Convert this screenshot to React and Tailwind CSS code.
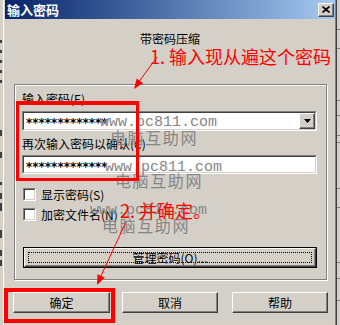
import React from "react";

function Raised({ className = "", children }) {
  return (
    <div
      className={
        "bg-[#d4d0c8] border border-t-white border-l-white border-r-[#404040] border-b-[#404040] shadow-[inset_-1px_-1px_0_#808080] " +
        className
      }
    >
      {children}
    </div>
  );
}

function Sunken({ className = "", innerClass = "", children }) {
  return (
    <div
      className={
        "border border-t-[#808080] border-l-[#808080] border-r-white border-b-white " +
        className
      }
    >
      <div
        className={
          "h-full border border-t-[#404040] border-l-[#404040] border-r-[#d4d0c8] border-b-[#d4d0c8] bg-white " +
          innerClass
        }
      >
        {children}
      </div>
    </div>
  );
}

const cjk = "font-['Noto_Sans_CJK_SC','Noto_Sans',sans-serif]";

function Stars() {
  return (
    <span className="pl-[2px] pt-[4px] font-['DejaVu_Sans',sans-serif] font-bold text-[12px] leading-[14px] text-black">
      *************
    </span>
  );
}

function Check({ label }) {
  return (
    <div className="ml-[1px] flex h-[13px] items-center">
      <Sunken className="h-[13px] w-[13px]" />
      <span className={"ml-[5px] text-[12px] leading-[14px] text-black " + cjk}>{label}</span>
    </div>
  );
}

const leftMarks = [
  [40, 3], [50, 3], [60, 3], [70, 3], [80, 3], [130, 6], [152, 6], [182, 3], [193, 6], [203, 8], [230, 8], [250, 6], [260, 6],
];
const rightLines = [29, 48, 100, 115, 135, 142, 188, 207, 262, 278, 300];

export default function App() {
  return (
    <div className="relative h-[325px] w-[340px] overflow-hidden bg-[#d4d0c8]">
      <div className="flex h-full">
        {/* background window, left edge */}
        <div className="flex w-[3px] flex-col">
          {leftMarks.map(([y, h], i) => (
            <div
              key={i}
              className="absolute left-0 w-[2px] bg-[#404040]"
              style={{ top: y, height: h }}
            />
          ))}
        </div>

        {/* dialog */}
        <div className="h-full w-[334px] border-l border-l-white border-r border-r-[#404040]">
          <div className="h-full border-r border-r-[#808080] pl-[1px]">
            {/* title bar */}
            <div className="flex h-[19px] items-center justify-between bg-linear-to-r from-[#0a246a] to-[#a6caf0]">
              <span className={"pl-[2px] text-[13px] font-bold leading-[15px] text-white " + cjk}>输入密码</span>
              <Raised className="mr-[1px] flex h-[14px] w-[16px] items-center justify-center">
                <svg width="8" height="7" viewBox="0 0 8 7">
                  <path d="M0.5 0.5 L7.5 6.5 M7.5 0.5 L0.5 6.5" stroke="#000" strokeWidth="1.7" />
                </svg>
              </Raised>
            </div>

            {/* body */}
            <div className={"flex flex-col text-black " + cjk}>
              <div className="pl-[135px] pt-[13px] text-[12px] leading-[14px]">带密码压缩</div>

              <div className="ml-[9px] mt-[38px] flex h-[196px] w-[313px] flex-col border border-[#808080] pl-[7px] pt-[7px] shadow-[inset_1px_1px_0_#fff,1px_1px_0_#fff]">
                <div className="text-[12px] leading-[14px]">输入密码(E)</div>
                <Sunken className="mt-[5px] h-[20px] w-[295px]" innerClass="flex items-center justify-between">
                  <Stars />
                  <Raised className="flex h-full w-[16px] items-center justify-center">
                    <svg width="7" height="4" viewBox="0 0 7 4">
                      <path d="M0 0h7l-3.5 4z" fill="#000" />
                    </svg>
                  </Raised>
                </Sunken>
                <div className="mt-[6px] text-[12px] leading-[14px]">再次输入密码以确认(C)</div>
                <Sunken className="mt-[4px] h-[19px] w-[295px]" innerClass="flex items-center">
                  <Stars />
                </Sunken>

                <div className="mt-[14px]">
                  <Check label="显示密码(S)" />
                </div>
                <div className="mt-[7px]">
                  <Check label="加密文件名(N)" />
                </div>

                <div className="ml-[1px] mt-[26px] h-[21px] w-[294px] border border-black">
                  <Raised className="flex h-full items-center justify-center p-[3px]">
                    <div className="flex h-full w-full items-center justify-center border border-dotted border-black text-[12px] leading-[14px]">
                      管理密码(O)...
                    </div>
                  </Raised>
                </div>
              </div>

              <div className="mt-[12px] flex pl-[8px]">
                <Raised className="flex h-[21px] w-[97px] items-center justify-center text-[12px] leading-[14px]">确定</Raised>
                <Raised className="ml-[12px] flex h-[21px] w-[96px] items-center justify-center text-[12px] leading-[14px]">取消</Raised>
                <Raised className="ml-[14px] flex h-[21px] w-[96px] items-center justify-center text-[12px] leading-[14px]">帮助</Raised>
              </div>
            </div>
          </div>
        </div>

        {/* background window, right edge */}
        <div className="w-[3px]">
          {rightLines.map((y, i) => (
            <div key={i} className="absolute right-0 h-px w-[3px] bg-[#808080]" style={{ top: y }} />
          ))}
        </div>
      </div>

      {/* watermarks */}
      <div className="pointer-events-none absolute inset-0 text-[#868686]">
        <div className="absolute left-[100px] top-[115px] font-['Liberation_Mono',monospace] text-[15px] leading-[15px]">www.pc811.com</div>
        <div className={"absolute left-[110px] top-[129px] text-[16px] leading-[16px] tracking-[1.6px] " + cjk}>电脑互助网</div>
        <div className="absolute left-[105px] top-[160px] font-['Liberation_Mono',monospace] text-[15px] leading-[15px]">www.pc811.com</div>
        <div className={"absolute left-[115px] top-[172px] text-[16px] leading-[16px] tracking-[1.6px] " + cjk}>电脑互助网</div>
        <div className="absolute left-[90px] top-[203px] font-['Liberation_Mono',monospace] text-[15px] leading-[15px]">www.pc811.com</div>
        <div className={"absolute left-[102px] top-[217px] text-[16px] leading-[16px] tracking-[1.6px] " + cjk}>电脑互助网</div>
      </div>

      {/* red annotations */}
      <div className="pointer-events-none absolute inset-0">
        <div className="absolute left-[16px] top-[101px] h-[80px] w-[123px] border-[3px] border-t-4 border-[#ff0000]" />
        <div className="absolute left-[4px] top-[288px] h-[35px] w-[111px] border-4 border-[#ff0000]" />
        <div className={"absolute left-[150px] top-[47px] text-[18px] leading-[18px] text-[#ff0000] " + cjk}>1. 输入现从遍这个密码</div>
        <div className={"absolute left-[120px] top-[201px] text-[18px] leading-[18px] text-[#ff0000] " + cjk}>2. 并确定。</div>
        <svg className="absolute left-0 top-0" width="340" height="325" viewBox="0 0 340 325">
          <line x1="157" y1="57" x2="138" y2="83" stroke="#ff0000" strokeWidth="1" />
          <polygon points="134,89 143.1,83.2 136.6,78.5" fill="#ff0000" />
          <line x1="126" y1="222" x2="100" y2="278" stroke="#ff0000" strokeWidth="1" />
          <polygon points="97,285 104.8,277.6 97.5,274.3" fill="#ff0000" />
        </svg>
      </div>
    </div>
  );
}
